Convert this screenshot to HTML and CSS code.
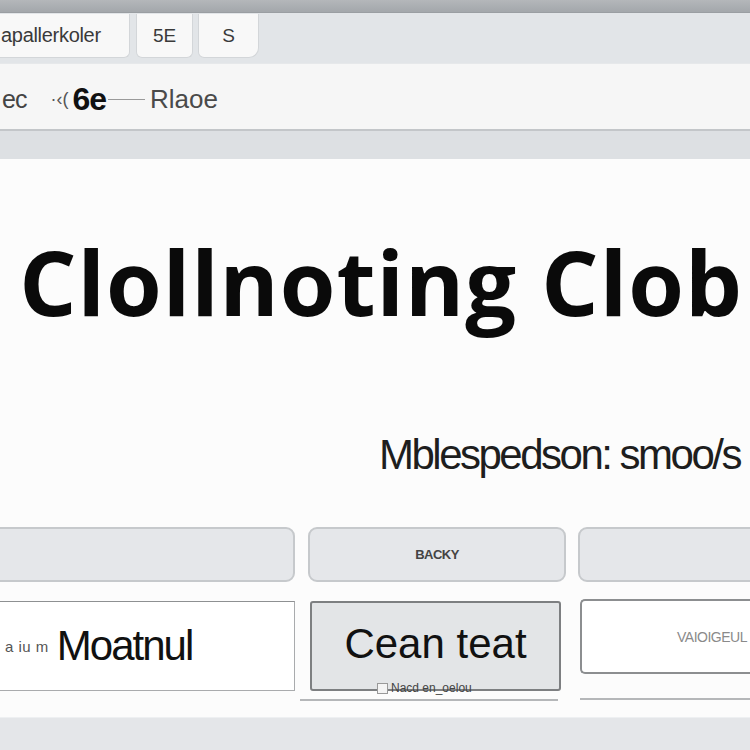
FILE: index.html
```html
<!DOCTYPE html>
<html>
<head>
<meta charset="utf-8">
<link rel="stylesheet" href="styles.css">
</head>
<body>
<div class="app">
  <div class="topbar"></div>
  <div class="tabs">
    <div class="tab tab-first">apallerkoler</div>
    <div class="tab tab-mid">5E</div>
    <div class="tab tab-last">S</div>
  </div>
  <div class="toolbar">
    <span class="tool tool-a">ec</span>
    <span class="tool-dots">·‹(</span>
    <span class="tool tool-b">6e</span>
    <span class="tool-line"></span>
    <span class="tool tool-c">Rlaoe</span>
  </div>
  <div class="gap"></div>
  <div class="content">
    <h1 class="title">Clollnoting Clob</h1>
    <p class="subtitle">Mblespedson: smoo/s</p>
    <div class="row row-one">
      <div class="btn btn-1"></div>
      <div class="btn btn-2">BACKY</div>
      <div class="btn btn-3"></div>
    </div>
    <div class="row row-two">
      <div class="col col-1">
        <div class="box box-1"><span class="box-small">a iu m</span><span class="box-big tight">Moatnul</span></div>
      </div>
      <div class="col col-2">
        <div class="box box-2"><span class="box-big">Cean teat</span><span class="box-note"><span class="check"></span>Nacd en_oelou</span></div>
        <div class="rule"></div>
      </div>
      <div class="col col-3">
        <div class="box box-3"><span class="box-label">VAIOIGEUL</span></div>
        <div class="rule"></div>
      </div>
    </div>
    <div class="footer"></div>
  </div>
</div>
</body>
</html>
```
FILE: styles.css
```css
html, body {
  margin: 0;
  padding: 0;
}
body {
  width: 750px;
  height: 750px;
  overflow: hidden;
  background: #fcfcfc;
  font-family: "Liberation Sans", Arial, sans-serif;
}
.app {
  display: flex;
  flex-direction: column;
  width: 750px;
  height: 750px;
  overflow: hidden;
}
.topbar {
  height: 12px;
  background: linear-gradient(#b4b7ba, #a3a7ab);
  border-bottom: 1px solid #9a9ea2;
}
.tabs {
  height: 50px;
  background: #e2e5e8;
  display: flex;
  align-items: flex-start;
  gap: 6px;
  box-sizing: border-box;
  padding-top: 1px;
}
.tab {
  flex-shrink: 0;
  height: 44px;
  background: #f8f8f8;
  border: 1px solid #d3d6d9;
  border-top: none;
  box-sizing: border-box;
  display: flex;
  align-items: center;
  justify-content: center;
  font-size: 19px;
  color: #3a3a3a;
  border-radius: 0 0 6px 6px;
}
.tab-first {
  width: 140px;
  margin-left: -10px;
  justify-content: flex-start;
  padding-left: 10px;
  font-size: 20px;
  letter-spacing: -0.3px;
}
.tab-mid {
  width: 57px;
}
.tab-last {
  width: 61px;
  margin-left: -1px;
  border-radius: 0 0 10px 6px;
}
.toolbar {
  height: 68px;
  background: #f6f6f6;
  border-top: 1px solid #e6e8ea;
  border-bottom: 2px solid #c3c6c9;
  box-sizing: border-box;
  display: flex;
  align-items: center;
  padding-top: 6px;
}
.tool {
  font-size: 25px;
  color: #444;
}
.tool-a {
  margin-left: 2px;
  letter-spacing: -1px;
}
.tool-dots {
  margin-left: 24px;
  font-size: 18px;
  color: #555;
}
.tool-b {
  margin-left: 4px;
  font-size: 32px;
  color: #111;
  font-weight: bold;
  letter-spacing: -1px;
}
.tool-line {
  width: 37px;
  height: 1px;
  background: #9a9a9a;
  margin-left: 2px;
}
.tool-c {
  margin-left: 5px;
  font-size: 26px;
  letter-spacing: 0px;
  color: #4a4a4a;
}
.gap {
  height: 28px;
  background: #dde0e3;
}
.content {
  flex: 1;
  display: flex;
  flex-direction: column;
  background: #fcfcfc;
}
.title {
  margin: 72px 0 0 0;
  font-family: "Open Sans", sans-serif;
  font-weight: 700;
  font-size: 90px;
  line-height: 100px;
  height: 100px;
  text-align: center;
  letter-spacing: 1px;
  color: #0a0a0a;
  white-space: nowrap;
  padding-left: 12px;
}
.subtitle {
  margin: 99px 0 0 0;
  height: 50px;
  font-size: 42px;
  line-height: 50px;
  letter-spacing: -2.5px;
  text-align: right;
  padding-right: 10px;
  color: #1e1e1e;
  white-space: nowrap;
}
.row {
  display: flex;
  align-items: flex-start;
}
.row > * {
  flex-shrink: 0;
}
.row-one {
  margin-top: 47px;
  height: 55px;
}
.btn {
  height: 55px;
  box-sizing: border-box;
  background: #e5e7ea;
  border: 2px solid #c6c9cc;
  border-radius: 9px;
  display: flex;
  align-items: center;
  justify-content: center;
}
.btn-1 {
  width: 306px;
  margin-left: -11px;
}
.btn-2 {
  width: 258px;
  margin-left: 13px;
  font-size: 13px;
  font-weight: bold;
  color: #444;
  letter-spacing: -0.5px;
}
.btn-3 {
  width: 190px;
  margin-left: 12px;
}
.row-two {
  margin-top: 19px;
  height: 116px;
}
.col {
  display: flex;
  flex-direction: column;
}
.col-1 {
  width: 306px;
  margin-left: -11px;
}
.col-2 {
  width: 258px;
  margin-left: 5px;
}
.col-3 {
  width: 180px;
  margin-left: 22px;
}
.box {
  box-sizing: border-box;
  display: flex;
  align-items: center;
}
.box-1 {
  height: 90px;
  background: #ffffff;
  border: 1px solid #a9abad;
  border-top-color: #8e9092;
  padding-left: 15px;
}
.box-small {
  font-size: 15px;
  color: #555;
  margin-right: 8px;
  letter-spacing: 0.5px;
}
.box-big {
  font-size: 42px;
  color: #111;
}
.tight {
  letter-spacing: -2px;
}
.box-2 {
  width: 251px;
  margin-left: 10px;
  height: 90px;
  background: #e3e5e7;
  border: 2px solid #7d7f81;
  border-radius: 3px;
  justify-content: center;
  position: relative;
  padding-bottom: 4px;
}
.box-note {
  position: absolute;
  left: 65px;
  bottom: -6px;
  font-size: 12px;
  color: #444;
  display: flex;
  align-items: center;
  gap: 3px;
}
.check {
  width: 9px;
  height: 9px;
  border: 1px solid #999;
  background: #f4f4f4;
}
.box-3 {
  margin-top: -2px;
  height: 75px;
  background: #ffffff;
  border: 2px solid #8c8e90;
  border-right: none;
  border-radius: 5px 0 0 5px;
  justify-content: flex-end;
}
.box-label {
  font-size: 14px;
  color: #8a8a8a;
  letter-spacing: -0.5px;
  margin-right: 13px;
}
.rule {
  height: 2px;
  background: #b5b7b9;
  margin-top: 8px;
  width: 258px;
}
.col-3 .rule {
  margin-top: 24px;
  width: 180px;
}
.footer {
  margin-top: 0;
  flex: 1;
  background: #e4e6e9;
  border-top: 1px solid #eef0f2;
}
```
